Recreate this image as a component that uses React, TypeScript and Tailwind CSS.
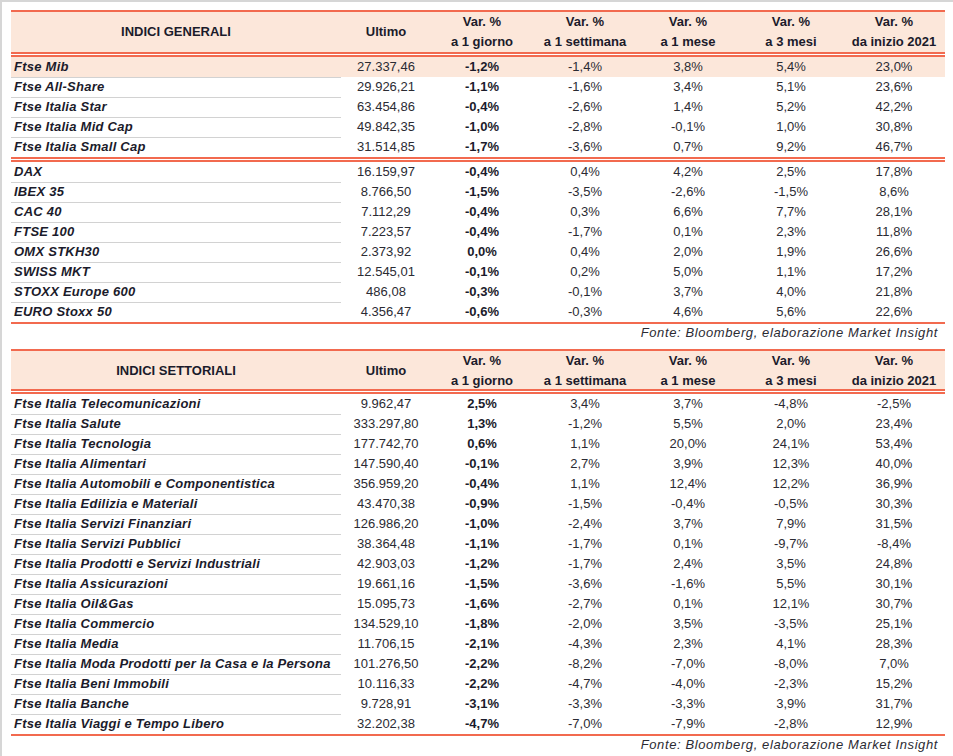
import React from "react";

type Row = [string, string, string, string, string, string, string];

const generaliA: Row[] = [
  ["Ftse Mib", "27.337,46", "-1,2%", "-1,4%", "3,8%", "5,4%", "23,0%"],
  ["Ftse All-Share", "29.926,21", "-1,1%", "-1,6%", "3,4%", "5,1%", "23,6%"],
  ["Ftse Italia Star", "63.454,86", "-0,4%", "-2,6%", "1,4%", "5,2%", "42,2%"],
  ["Ftse Italia Mid Cap", "49.842,35", "-1,0%", "-2,8%", "-0,1%", "1,0%", "30,8%"],
  ["Ftse Italia Small Cap", "31.514,85", "-1,7%", "-3,6%", "0,7%", "9,2%", "46,7%"],
];

const generaliB: Row[] = [
  ["DAX", "16.159,97", "-0,4%", "0,4%", "4,2%", "2,5%", "17,8%"],
  ["IBEX 35", "8.766,50", "-1,5%", "-3,5%", "-2,6%", "-1,5%", "8,6%"],
  ["CAC 40", "7.112,29", "-0,4%", "0,3%", "6,6%", "7,7%", "28,1%"],
  ["FTSE 100", "7.223,57", "-0,4%", "-1,7%", "0,1%", "2,3%", "11,8%"],
  ["OMX STKH30", "2.373,92", "0,0%", "0,4%", "2,0%", "1,9%", "26,6%"],
  ["SWISS MKT", "12.545,01", "-0,1%", "0,2%", "5,0%", "1,1%", "17,2%"],
  ["STOXX Europe 600", "486,08", "-0,3%", "-0,1%", "3,7%", "4,0%", "21,8%"],
  ["EURO Stoxx 50", "4.356,47", "-0,6%", "-0,3%", "4,6%", "5,6%", "22,6%"],
];

const settoriali: Row[] = [
  ["Ftse Italia Telecomunicazioni", "9.962,47", "2,5%", "3,4%", "3,7%", "-4,8%", "-2,5%"],
  ["Ftse Italia Salute", "333.297,80", "1,3%", "-1,2%", "5,5%", "2,0%", "23,4%"],
  ["Ftse Italia Tecnologia", "177.742,70", "0,6%", "1,1%", "20,0%", "24,1%", "53,4%"],
  ["Ftse Italia Alimentari", "147.590,40", "-0,1%", "2,7%", "3,9%", "12,3%", "40,0%"],
  ["Ftse Italia Automobili e Componentistica", "356.959,20", "-0,4%", "1,1%", "12,4%", "12,2%", "36,9%"],
  ["Ftse Italia Edilizia e Materiali", "43.470,38", "-0,9%", "-1,5%", "-0,4%", "-0,5%", "30,3%"],
  ["Ftse Italia Servizi Finanziari", "126.986,20", "-1,0%", "-2,4%", "3,7%", "7,9%", "31,5%"],
  ["Ftse Italia Servizi Pubblici", "38.364,48", "-1,1%", "-1,7%", "0,1%", "-9,7%", "-8,4%"],
  ["Ftse Italia Prodotti e Servizi Industriali", "42.903,03", "-1,2%", "-1,7%", "2,4%", "3,5%", "24,8%"],
  ["Ftse Italia Assicurazioni", "19.661,16", "-1,5%", "-3,6%", "-1,6%", "5,5%", "30,1%"],
  ["Ftse Italia Oil&Gas", "15.095,73", "-1,6%", "-2,7%", "0,1%", "12,1%", "30,7%"],
  ["Ftse Italia Commercio", "134.529,10", "-1,8%", "-2,0%", "3,5%", "-3,5%", "25,1%"],
  ["Ftse Italia Media", "11.706,15", "-2,1%", "-4,3%", "2,3%", "4,1%", "28,3%"],
  ["Ftse Italia Moda Prodotti per la Casa e la Persona", "101.276,50", "-2,2%", "-8,2%", "-7,0%", "-8,0%", "7,0%"],
  ["Ftse Italia Beni Immobili", "10.116,33", "-2,2%", "-4,7%", "-4,0%", "-2,3%", "15,2%"],
  ["Ftse Italia Banche", "9.728,91", "-3,1%", "-3,3%", "-3,3%", "3,9%", "31,7%"],
  ["Ftse Italia Viaggi e Tempo Libero", "32.202,38", "-4,7%", "-7,0%", "-7,9%", "-2,8%", "12,9%"],
];

const cols = "grid grid-cols-[330px_90px_102px_104px_102px_104px_102px]";

function OrangeLine() {
  return <div className="h-[2px] bg-[#f26a4f]" />;
}

function DoubleLine() {
  return (
    <div>
      <div className="h-[2px] bg-[#f26a4f]" />
      <div className="h-[1px] bg-white" />
      <div className="h-[2px] bg-[#f26a4f]" />
    </div>
  );
}

function Header({ title, height }: { title: string; height: string }) {
  const vars = ["a 1 giorno", "a 1 settimana", "a 1 mese", "a 3 mesi", "da inizio 2021"];
  return (
    <div className={`${cols} ${height} bg-[#fce7da] font-bold text-[13px] text-[#1b1b2b]`}>
      <div className="flex items-center justify-center">{title}</div>
      <div className="flex items-center justify-center">Ultimo</div>
      {vars.map((v) => (
        <div key={v} className="flex flex-col items-center justify-center leading-[20px]">
          <span>Var. %</span>
          <span>{v}</span>
        </div>
      ))}
    </div>
  );
}

function DataRow({ row, last, highlight }: { row: Row; last: boolean; highlight?: boolean }) {
  return (
    <div className={`${cols} h-5 text-[13px] leading-[20px] ${highlight ? "bg-[#fce7da]" : ""}`}>
      <div
        className={`pl-[3px] font-bold italic tracking-[0.25px] text-[#1b1b2b] ${
          last ? "" : "border-b border-[#d2d2d2]"
        }`}
      >
        {row[0]}
      </div>
      <div className="text-center text-[#2b2b33]">{row[1]}</div>
      <div className="text-center font-bold text-[#1b1b2b]">{row[2]}</div>
      {row.slice(3).map((v, i) => (
        <div key={i} className="text-center text-[#2b2b33]">
          {v}
        </div>
      ))}
    </div>
  );
}

function Fonte() {
  return (
    <div className="h-[17px] pr-[7px] text-right text-[13px] leading-[17px] italic tracking-[0.6px] text-[#2b2b33]">
      Fonte: Bloomberg, elaborazione Market Insight
    </div>
  );
}

export default function App() {
  return (
    <div
      className="min-h-screen bg-white border-t-2 border-l-2 border-[#d6d6d6] pt-2 pl-[9px]"
      style={{ fontFamily: '"Liberation Sans", Arial, sans-serif' }}
    >
      <div className="w-[934px]">
        <OrangeLine />
        <Header title="INDICI GENERALI" height="h-[40px]" />
        <DoubleLine />
        {generaliA.map((r, i) => (
          <DataRow key={r[0]} row={r} last={i === generaliA.length - 1} highlight={i === 0} />
        ))}
        <DoubleLine />
        {generaliB.map((r, i) => (
          <DataRow key={r[0]} row={r} last={i === generaliB.length - 1} />
        ))}
        <OrangeLine />
        <Fonte />
        <div className="h-2" />
        <OrangeLine />
        <Header title="INDICI SETTORIALI" height="h-[38px]" />
        <DoubleLine />
        {settoriali.map((r, i) => (
          <DataRow key={r[0]} row={r} last={i === settoriali.length - 1} />
        ))}
        <OrangeLine />
        <Fonte />
      </div>
    </div>
  );
}
